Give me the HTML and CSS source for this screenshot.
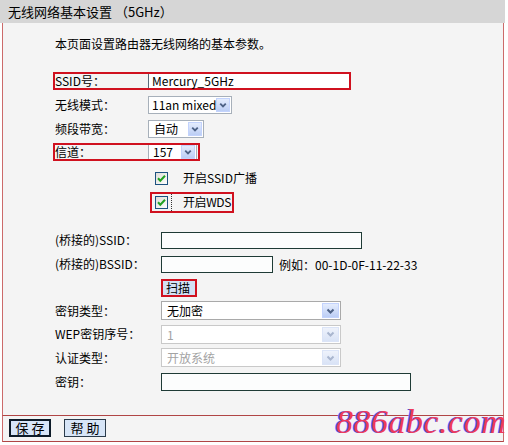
FILE: index.html
```html
<!DOCTYPE html>
<html lang="zh-CN">
<head>
<meta charset="utf-8">
<title>无线网络基本设置</title>
<link rel="stylesheet" href="styles.css">
</head>
<body>
<div class="page">
  <div class="title">无线网络基本设置 （5GHz）</div>
  <div class="panel">
    <p class="intro">本页面设置路由器无线网络的基本参数。</p>
    <div class="form g1">
      <div class="row r24">
        <div class="hl hl-ssid"><span class="lbl lbl1 in-hl">SSID号：</span><span class="field-ssid">Mercury_5GHz</span></div>
      </div>
      <div class="row r24">
        <span class="lbl lbl1">无线模式：</span>
        <span class="sel s-mode"><span class="val">11an mixed</span><span class="arr"><svg width="13" height="12" viewBox="0 0 13 12"><path d="M3.5 4.5 L6.5 7.5 L9.5 4.5" stroke="#4d6185" stroke-width="2" fill="none"/></svg></span></span>
      </div>
      <div class="row r24">
        <span class="lbl lbl1">频段带宽：</span>
        <span class="sel s-bw"><span class="val">自动</span><span class="arr"><svg width="13" height="12" viewBox="0 0 13 12"><path d="M3.5 4.5 L6.5 7.5 L9.5 4.5" stroke="#4d6185" stroke-width="2" fill="none"/></svg></span></span>
      </div>
      <div class="row r22">
        <div class="hl hl-ch"><span class="lbl lbl1 in-hl">信道：</span><span class="sel s-ch"><span class="val">157</span><span class="arr"><svg width="13" height="12" viewBox="0 0 13 12"><path d="M3.5 4.5 L6.5 7.5 L9.5 4.5" stroke="#4d6185" stroke-width="2" fill="none"/></svg></span></span></div>
      </div>
      <div class="row r24 chk-row first-chk">
        <span class="chk-wrap">
          <svg class="chk" width="13" height="13" viewBox="0 0 13 13"><defs><linearGradient id="cg1" x1="0" y1="0" x2="1" y2="1"><stop offset="0" stop-color="#dcdcd7"/><stop offset="1" stop-color="#ffffff"/></linearGradient></defs><rect x="0.5" y="0.5" width="12" height="12" fill="url(#cg1)" stroke="#1c5180"/><path d="M3 6.3 L5.3 8.8 L10 3.8" stroke="#21a121" stroke-width="2" fill="none"/></svg>
          <span class="chk-text">开启SSID广播</span>
        </span>
      </div>
      <div class="row r24 chk-row">
        <span class="hl hl-wds">
          <svg class="chk" width="13" height="13" viewBox="0 0 13 13"><defs><linearGradient id="cg2" x1="0" y1="0" x2="1" y2="1"><stop offset="0" stop-color="#dcdcd7"/><stop offset="1" stop-color="#ffffff"/></linearGradient></defs><rect x="0.5" y="0.5" width="12" height="12" fill="url(#cg2)" stroke="#1c5180"/><path d="M3 6.3 L5.3 8.8 L10 3.8" stroke="#21a121" stroke-width="2" fill="none"/></svg>
          <span class="chk-text focus">开启WDS</span>
        </span>
      </div>
    </div>

    <div class="form g2">
      <div class="row r24">
        <span class="lbl lbl2">(桥接的)SSID：</span>
        <span class="txt t-ssid"></span>
      </div>
      <div class="row r24">
        <span class="lbl lbl2">(桥接的)BSSID：</span>
        <span class="txt t-bssid"></span>
        <span class="hint">例如：00-1D-0F-11-22-33</span>
      </div>
      <div class="row r23">
        <span class="lbl lbl2"></span>
        <span class="hl hl-scan"><span class="scan">扫描</span></span>
      </div>
      <div class="row r23">
        <span class="lbl lbl2">密钥类型：</span>
        <span class="sel s-wide"><span class="val">无加密</span><span class="arr big"><svg width="13" height="12" viewBox="0 0 13 12"><path d="M3.5 4.5 L6.5 7.5 L9.5 4.5" stroke="#4d6185" stroke-width="2" fill="none"/></svg></span></span>
      </div>
      <div class="row r24">
        <span class="lbl lbl2">WEP密钥序号：</span>
        <span class="sel s-wide dis"><span class="val">1</span><span class="arr big"><svg width="13" height="12" viewBox="0 0 13 12"><path d="M3.5 4.5 L6.5 7.5 L9.5 4.5" stroke="#a9b6cf" stroke-width="2" fill="none"/></svg></span></span>
      </div>
      <div class="row r23">
        <span class="lbl lbl2">认证类型：</span>
        <span class="sel s-wide dis"><span class="val">开放系统</span><span class="arr big"><svg width="13" height="12" viewBox="0 0 13 12"><path d="M3.5 4.5 L6.5 7.5 L9.5 4.5" stroke="#a9b6cf" stroke-width="2" fill="none"/></svg></span></span>
      </div>
      <div class="row r26">
        <span class="lbl lbl2">密钥：</span>
        <span class="txt t-key"></span>
      </div>
    </div>
  </div>
  <div class="actions">
    <button class="btn btn-default" type="button">保 存</button>
    <button class="btn" type="button">帮 助</button>
  </div>
  <div class="wm">886abc.com</div>
</div>
</body>
</html>
```

FILE: styles.css
```css
body {
  margin: 0;
  background: #ffffff;
  color: #000000;
  font-family: "Noto Sans CJK SC", "Noto Sans", sans-serif;
  font-size: 12px;
}

.page {
  position: relative;
  width: 505px;
}

.title {
  height: 23px;
  background: #d6d6d6;
  padding-left: 8px;
  font-size: 13px;
  line-height: 23px;
}

.panel {
  margin-left: 2px;
  width: 500px;
  height: 392px;
  background: #f4f4f4;
  border-left: 1px solid #cc6a6a;
  border-right: 1px solid #cc6a6a;
  border-bottom: 1px solid #b04545;
}

.intro {
  margin: 0;
  padding: 12px 0 0 52px;
  line-height: 18px;
}

.form {
  padding-left: 50px;
}

.g1 {
  margin-top: 16px;
}

.g2 {
  margin-top: 14px;
}

.row {
  display: flex;
  align-items: center;
}

.r22 { height: 22px; }
.r23 { height: 23px; }
.r24 { height: 24px; }
.r26 { height: 26px; }

.first-chk {
  margin-top: 3px;
}

.lbl {
  flex: none;
  margin-left: 2px;
  line-height: 16px;
  white-space: nowrap;
}

.lbl.in-hl {
  margin-left: 0;
}

.lbl1 { width: 93px; }
.lbl2 { width: 106px; }

.hl {
  display: flex;
  align-items: center;
  box-sizing: border-box;
  border: 2px solid #d0111f;
}

.hl-ssid {
  width: 298px;
  height: 18px;
}

.field-ssid {
  align-self: stretch;
  flex: 1;
  border-left: 1px solid #5a6a7a;
  background: #ffffff;
  padding-left: 3px;
  line-height: 14px;
  font-size: 12px;
}

.hl-ch {
  width: 147px;
  height: 18px;
}

.sel {
  display: flex;
  align-items: stretch;
  box-sizing: border-box;
  border: 1px solid #a7b0ba;
  background: #ffffff;
  padding: 1px;
}

.sel .val {
  flex: 1;
  padding-left: 2px;
  line-height: 14px;
  white-space: nowrap;
}

.arr {
  flex: none;
  width: 14px;
  box-sizing: border-box;
  border: 1px solid #c3d3fd;
  background: linear-gradient(#e4ecfd, #bccef5);
  display: flex;
  align-items: center;
  justify-content: center;
}

.arr svg {
  display: block;
}

.arr.big {
  width: 17px;
}

.s-mode {
  width: 84px;
  height: 18px;
}

.s-bw {
  width: 56px;
  height: 18px;
}

.s-bw .val {
  padding-left: 4px;
}

.s-ch {
  width: 49px;
  height: 14px;
  border-top: none;
  border-bottom: none;
  padding: 0 1px;
}

.s-ch .val {
  padding-left: 3px;
}

.s-wide {
  width: 180px;
  height: 19px;
  border-color: #a9a9a9;
}

.s-wide .val {
  padding-left: 4px;
  line-height: 15px;
}

.s-wide.dis {
  border-color: #c9c9c9;
}

.s-wide.dis .val {
  color: #a3a3a3;
}

.s-wide.dis .arr {
  border-color: #dbe4f7;
  background: linear-gradient(#eef2fb, #d9e3f6);
}

.chk-wrap {
  display: flex;
  align-items: center;
  margin-left: 102px;
}

.chk {
  display: block;
  flex: none;
}

.chk-text {
  margin-left: 15px;
  line-height: 16px;
  white-space: nowrap;
}

.hl-wds {
  margin-left: 97px;
  height: 21px;
  padding-left: 3px;
  padding-right: 1px;
}

.hl-wds .chk-text {
  margin-left: 3px;
  padding-left: 11px;
  border-left: 1px dotted #333333;
  align-self: stretch;
  display: flex;
  align-items: center;
  letter-spacing: -0.4px;
}

.txt {
  display: block;
  box-sizing: border-box;
  border: 1px solid #1f3b36;
  background: #fcfdfd;
}

.t-ssid {
  width: 201px;
  height: 17px;
}

.t-bssid {
  width: 112px;
  height: 17px;
}

.t-key {
  width: 250px;
  height: 18px;
}

.hint {
  margin-left: 6px;
  white-space: nowrap;
}

.hl-scan {
  width: 36px;
  height: 18px;
  margin-left: 0;
}

.scan {
  flex: 1;
  align-self: stretch;
  background: #d3e1f4;
  padding-left: 3px;
  line-height: 14px;
}

.actions {
  display: flex;
  align-items: flex-start;
  gap: 13px;
  margin-left: 2px;
  width: 494px;
  height: 25px;
  padding-left: 6px;
  border-left: 1px solid #cc6a6a;
  border-right: 1px solid #cc6a6a;
  border-bottom: 1px solid #b04545;
  background: #f4f4f4;
}

.btn {
  margin: 3px 0 0 0;
  width: 42px;
  height: 18px;
  box-sizing: border-box;
  padding: 0;
  border: 1px solid #2b3b4b;
  background: #d7e5f7;
  color: #000000;
  font-family: "Noto Sans CJK SC", sans-serif;
  font-size: 13px;
  line-height: 14px;
}

.btn-default {
  border: 2px solid #0d1b28;
}

.wm {
  position: absolute;
  left: 336px;
  top: 402px;
  font-family: "Liberation Serif", serif;
  font-style: italic;
  font-size: 34px;
  line-height: 40px;
  letter-spacing: 0.5px;
  color: #ee3a5c;
  text-shadow: -1.5px 0 #4f5dff;
  white-space: nowrap;
}
```
